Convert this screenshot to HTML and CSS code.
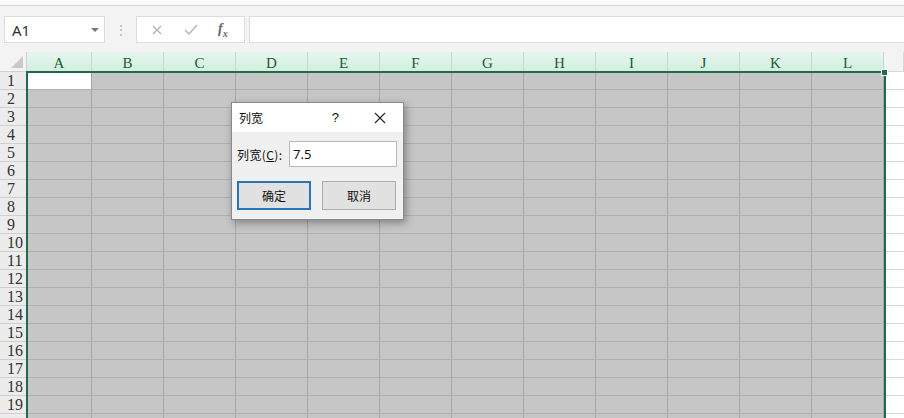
FILE: index.html
```html
<!DOCTYPE html>
<html lang="zh-CN">
<head>
  <meta charset="UTF-8" />
  <title>列宽</title>
  <link rel="stylesheet" href="styles.css">
</head>
<body>
  <div class="top-strip"></div>

  <div class="formula-bar">
    <div class="name-box">
      <span>A1</span>
      <span class="caret"></span>
    </div>
    <div class="grip">⋮</div>
    <div class="fx-group">
      <svg class="fx-icon" width="12" height="12" viewBox="0 0 12 12">
        <path d="M2 2 L10 10 M10 2 L2 10" stroke="#b4b4b4" stroke-width="1.4" fill="none"/>
      </svg>
      <svg class="fx-icon" width="14" height="12" viewBox="0 0 14 12">
        <path d="M1 6 L5 10 L13 1" stroke="#b4b4b4" stroke-width="1.4" fill="none"/>
      </svg>
      <span class="fx">f<sub>x</sub></span>
    </div>
    <div class="formula-input"></div>
  </div>

  <div class="sheet">
    <div class="grid" id="grid"></div>
    <div class="selection">
      <span class="handle"></span>
    </div>

    <div class="dialog">
      <div class="dialog-title">
        <span class="title-text">列宽</span>
        <span class="help">?</span>
        <svg class="close" width="12" height="12" viewBox="0 0 12 12">
          <path d="M1 1 L11 11 M11 1 L1 11" stroke="#222" stroke-width="1.1" fill="none"/>
        </svg>
      </div>
      <div class="dialog-body">
        <div class="field">
          <label for="width">列宽(<u>C</u>):</label>
          <input type="text" id="width" value="7.5" />
        </div>
        <div class="buttons">
          <button class="btn primary">确定</button>
          <button class="btn">取消</button>
        </div>
      </div>
    </div>
  </div>

  <script>
    const cols = ['A', 'B', 'C', 'D', 'E', 'F', 'G', 'H', 'I', 'J', 'K', 'L', ''];
    const grid = document.getElementById('grid');

    function addCell(cls, text) {
      const div = document.createElement('div');
      div.className = cls;
      div.textContent = text || '';
      grid.appendChild(div);
    }

    addCell('corner');
    cols.forEach(c => addCell(c ? 'col-head' : 'col-head plain', c));

    // row 20 only peeks in at the bottom edge, so its number is left off
    for (let r = 1; r <= 20; r++) {
      addCell('row-head', r < 20 ? r : '');
      cols.forEach((c, i) => {
        let cls = 'cell';
        if (!c) cls += ' plain';
        else if (r === 1 && i === 0) cls += ' active';
        addCell(cls);
      });
    }
  </script>
</body>
</html>
```

FILE: styles.css
```css
body {
  margin: 0;
  width: 904px;
  height: 418px;
  overflow: hidden;
  background: #fff;
  font-family: "Noto Sans", "Liberation Sans", "Noto Sans CJK SC", sans-serif;
}

.top-strip {
  height: 5px;
  background: #f9f9f9;
  border-bottom: 1px solid #d6d6d6;
}

.formula-bar {
  display: flex;
  align-items: center;
  height: 46px;
  padding: 10px 0 9px 4px;
  box-sizing: border-box;
  background: #f3f3f3;
}

.name-box {
  display: flex;
  align-items: center;
  justify-content: space-between;
  width: 101px;
  height: 27px;
  box-sizing: border-box;
  padding: 0 5px 0 7px;
  background: #fff;
  border: 1px solid #dcdcdc;
  font-size: 15px;
  color: #333;
}

.caret {
  width: 0;
  height: 0;
  border-left: 4px solid transparent;
  border-right: 4px solid transparent;
  border-top: 4px solid #777;
}

.grip {
  width: 31px;
  text-align: center;
  color: #b8b8b8;
  font-size: 14px;
}

.fx-group {
  display: flex;
  align-items: center;
  justify-content: space-around;
  width: 109px;
  height: 27px;
  box-sizing: border-box;
  padding: 0 6px 0 4px;
  background: #fff;
  border: 1px solid #dcdcdc;
}

.fx {
  font-family: "Liberation Serif", serif;
  font-style: italic;
  font-weight: bold;
  font-size: 14px;
  color: #666;
}

.fx sub {
  font-size: 10px;
}

.formula-input {
  flex: 1;
  height: 27px;
  margin-left: 4px;
  box-sizing: border-box;
  background: #fff;
  border: 1px solid #dcdcdc;
  border-right: none;
}

.sheet {
  position: relative;
}

.grid {
  display: grid;
  grid-template-columns: 27px 65px repeat(11, 72px) 1fr;
  grid-template-rows: 20px repeat(20, 18px);
}

.corner {
  position: relative;
  background: #f3f3f3;
  border-right: 1px solid #d0d0d0;
  border-bottom: 1px solid #d0d0d0;
}

.corner::after {
  content: "";
  position: absolute;
  right: 3px;
  bottom: 3px;
  border-left: 12px solid transparent;
  border-bottom: 12px solid #c9c9c9;
}

.col-head {
  background: linear-gradient(#e6f6ed, #d2efdf);
  border-right: 1px solid #c3d9cc;
  border-bottom: 1px solid #c3d9cc;
  color: #1d5a38;
  font-family: "Liberation Serif", serif;
  font-size: 15px;
  line-height: 22px;
  text-align: center;
}

.col-head.plain {
  background: #f3f3f3;
  border-color: #d8d8d8;
}

.row-head {
  background: #ececec;
  border-right: 1px solid #cfcfcf;
  border-bottom: 1px solid #cfcfcf;
  color: #333;
  font-family: "Liberation Serif", serif;
  font-size: 16px;
  line-height: 18px;
  padding-left: 7px;
}

.cell {
  background: #c6c6c6;
  border-right: 1px solid #a6a6a6;
  border-bottom: 1px solid #b0b0b0;
}

.cell.active {
  background: #fff;
}

.cell.plain {
  background: #fff;
  border-right: none;
  border-bottom-color: #dadada;
}

.selection {
  position: absolute;
  left: 26px;
  top: 19px;
  width: 856px;
  height: 400px;
  border: 2px solid #21694a;
  pointer-events: none;
}

.handle {
  position: absolute;
  right: -4px;
  top: -4px;
  width: 5px;
  height: 5px;
  background: #21694a;
  border: 1px solid #fff;
}

.dialog {
  position: absolute;
  left: 231px;
  top: 50px;
  width: 171px;
  border: 1px solid #8a8a8a;
  background: #f0f0f0;
  box-shadow: 2px 3px 8px rgba(0, 0, 0, 0.35);
  font-family: "Noto Sans CJK SC", sans-serif;
  font-size: 12px;
  color: #111;
}

.dialog-title {
  display: flex;
  align-items: center;
  height: 29px;
  padding: 0 17px 0 7px;
  background: #fff;
}

.title-text {
  flex: 1;
}

.help {
  margin-right: 35px;
  font-family: "Liberation Sans", sans-serif;
  font-size: 13px;
}

.dialog-body {
  padding: 9px 6px 9px 5px;
}

.field {
  display: flex;
  align-items: center;
  justify-content: space-between;
}

.field label {
  letter-spacing: 0.4px;
}

.field input {
  width: 108px;
  height: 26px;
  box-sizing: border-box;
  padding: 0 3px;
  border: 1px solid #b8b8b8;
  font-family: "Noto Sans", sans-serif;
  font-size: 13px;
  color: #111;
}

.buttons {
  display: flex;
  justify-content: space-between;
  margin-top: 14px;
  padding-right: 1px;
}

.btn {
  width: 74px;
  height: 29px;
  background: #e1e1e1;
  border: 1px solid #adadad;
  font-family: "Noto Sans CJK SC", sans-serif;
  font-size: 12px;
  color: #111;
  padding: 0;
}

.btn.primary {
  border: 2px solid #2b74b3;
}
```
